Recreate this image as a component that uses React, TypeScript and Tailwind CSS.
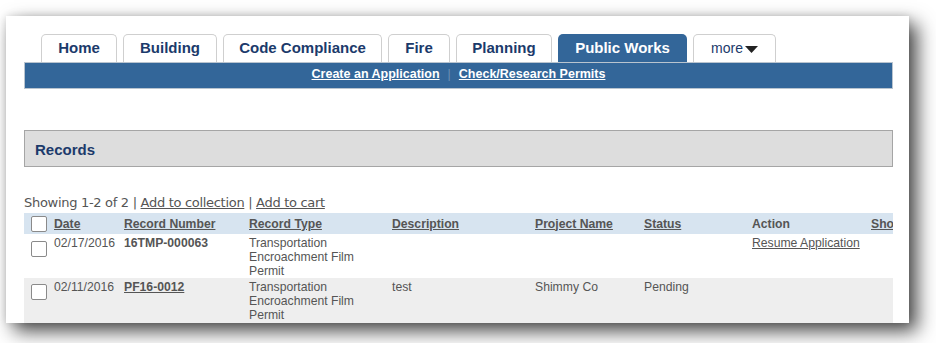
import React from 'react';

const tabs = [
  { label: 'Home', w: 'w-[76px]' },
  { label: 'Building', w: 'w-[94px]' },
  { label: 'Code Compliance', w: 'w-[159px]' },
  { label: 'Fire', w: 'w-[62px]' },
  { label: 'Planning', w: 'w-[96px]' },
];

const cols = 'grid grid-cols-[30px_70px_125px_143px_143px_109px_108px_119px_60px]';

function Box() {
  return <span className="block w-[16px] h-[16px] border border-[#8a8a8a] bg-white rounded-[2px]" />;
}

export default function App() {
  return (
    <div className="w-[936px] h-[343px] bg-white overflow-hidden pt-[16px] pl-[6px] font-['Liberation_Sans',Arial,sans-serif]">
      <div className="w-[903px] h-[307px] bg-white overflow-hidden shadow-[8px_8px_18px_rgba(0,0,0,0.72),0_0_8px_rgba(0,0,0,0.12)] pt-[18px] pl-[18px] pr-[16px]">
        {/* tabs */}
        <div className="flex gap-[6px] pl-[17px] h-[28px]">
          {tabs.map(t => (
            <div
              key={t.label}
              className={`${t.w} h-[28px] border border-b-0 border-[#cfcfcf] rounded-t-[5px] bg-white flex items-center justify-center text-[15px] font-bold text-[#1b3a6b]`}
            >
              {t.label}
            </div>
          ))}
          <div className="w-[129px] h-[28px] rounded-t-[5px] bg-[#336699] flex items-center justify-center text-[15px] font-bold text-white">
            Public Works
          </div>
          <div className="w-[83px] h-[28px] border border-b-0 border-[#cfcfcf] rounded-t-[5px] bg-white flex items-center justify-center text-[14px] text-[#1b3a6b]">
            <span className="pl-[1px]">more</span>
            <svg width="15" height="9" viewBox="0 0 15 9" className="ml-[1px] mt-[1px]">
              <path d="M1 1 L14 1 L7.5 8 Z" fill="#222" />
            </svg>
          </div>
        </div>
        {/* blue bar */}
        <div className="h-[27px] bg-[#336699] border border-[#b9c4cf] flex items-center justify-center pb-[3px] text-[12.5px] font-bold text-white">
          <a className="underline">Create an Application</a>
          <span className="mx-[8px] text-[#6d8fb3] font-normal">|</span>
          <a className="underline">Check/Research Permits</a>
        </div>

        {/* records panel */}
        <div className="mt-[41px] h-[37px] bg-[#dddddd] border border-[#a5a5a5] flex items-center pl-[10px] pt-[3px] text-[15px] font-bold text-[#1b3a6b]">
          Records
        </div>

        <div className="mt-[26px] h-[20px] text-[13px] text-[#555] font-['DejaVu_Sans',Verdana,sans-serif] tracking-[-0.3px] leading-[20px]">
          Showing 1-2 of 2 | <a className="underline">Add to collection</a> | <a className="underline">Add to cart</a>
        </div>

        {/* table */}
        <div className="w-[869px] overflow-hidden text-[12.2px] text-[#555] leading-[14px]">
          <div className={`${cols} h-[21px] bg-[#d7e4f0] items-center font-bold`}>
            <div className="pl-[7px]"><Box /></div>
            <div className="underline">Date</div>
            <div className="underline">Record Number</div>
            <div className="underline">Record Type</div>
            <div className="underline">Description</div>
            <div className="underline">Project Name</div>
            <div className="underline">Status</div>
            <div>Action</div>
            <div className="underline whitespace-nowrap">Sho</div>
          </div>
          <div className={`${cols} h-[44px] bg-white pt-[2px]`}>
            <div className="pl-[7px] pt-[5px]"><Box /></div>
            <div>02/17/2016</div>
            <div className="font-bold">16TMP-000063</div>
            <div>Transportation<br />Encroachment Film<br />Permit</div>
            <div />
            <div />
            <div />
            <div><a className="underline">Resume Application</a></div>
            <div />
          </div>
          <div className={`${cols} h-[46px] bg-[#eeeeee] pt-[2px]`}>
            <div className="pl-[7px] pt-[4px]"><Box /></div>
            <div>02/11/2016</div>
            <div className="font-bold underline">PF16-0012</div>
            <div>Transportation<br />Encroachment Film<br />Permit</div>
            <div>test</div>
            <div>Shimmy Co</div>
            <div>Pending</div>
            <div />
            <div />
          </div>
        </div>
      </div>
    </div>
  );
}
